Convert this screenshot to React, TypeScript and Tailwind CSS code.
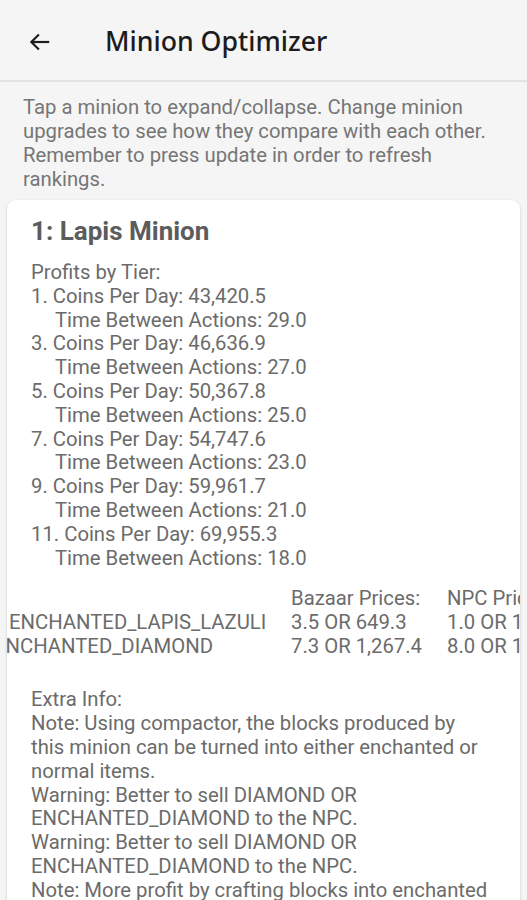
import React from 'react';

const tiers = [
  { tier: 1, coins: '43,420.5', time: '29.0' },
  { tier: 3, coins: '46,636.9', time: '27.0' },
  { tier: 5, coins: '50,367.8', time: '25.0' },
  { tier: 7, coins: '54,747.6', time: '23.0' },
  { tier: 9, coins: '59,961.7', time: '21.0' },
  { tier: 11, coins: '69,955.3', time: '18.0' },
];

const extraInfo = [
  'Note: Using compactor, the blocks produced by this minion can be turned into either enchanted or normal items.',
  'Warning: Better to sell DIAMOND OR ENCHANTED_DIAMOND to the NPC.',
  'Warning: Better to sell DIAMOND OR ENCHANTED_DIAMOND to the NPC.',
  'Note: More profit by crafting blocks into enchanted items.',
];

export default function App() {
  return (
    <div
      className="h-[900px] w-[527px] overflow-hidden bg-[#f5f5f5]"
      style={{ fontFamily: 'Roboto, "Liberation Sans", sans-serif' }}
    >
      {/* App bar */}
      <header className="flex h-[82px] items-center border-b-2 border-[#e3e3e3] bg-[#f5f5f5] pt-[3px]">
        <div className="flex w-[105px] items-center pl-[27px]">
          <svg width="26" height="26" viewBox="0 0 24 24" fill="none" stroke="#1c1c1c" strokeWidth="2">
            <path d="M20.5 12H4" />
            <path d="M11 5l-7 7 7 7" />
          </svg>
        </div>
        <h1
          className="text-[26.7px] font-medium text-[#1c1c1c]"
          style={{ fontFamily: '"Noto Sans", Roboto, sans-serif' }}
        >
          Minion Optimizer
        </h1>
      </header>

      {/* Intro */}
      <p className="px-[23px] pt-[13px] text-[20.3px] leading-[24px] text-[#767676]">
        Tap a minion to expand/collapse. Change minion upgrades to see how they compare with each other.
        Remember to press update in order to refresh rankings.
      </p>

      {/* Minion card */}
      <div className="mx-[7px] mt-[9px] overflow-hidden rounded-[9px] bg-white pb-6 shadow-[0_1px_3px_rgba(0,0,0,0.18)]">
        <h2 className="px-[24px] pt-[15px] text-[26px] font-bold leading-[32px] text-[#5c5c5c]">1: Lapis Minion</h2>

        <div className="mt-[14px] px-[24px] text-[20.3px] leading-[23.8px] text-[#6b6b6b]">
          <div>Profits by Tier:</div>
          {tiers.map((t) => (
            <React.Fragment key={t.tier}>
              <div>
                {t.tier}. Coins Per Day: {t.coins}
              </div>
              <div className="pl-[24px]">Time Between Actions: {t.time}</div>
            </React.Fragment>
          ))}
        </div>

        {/* Price table, wider than the card */}
        <div className="mt-[16px] whitespace-nowrap text-[20.3px] leading-[24px] text-[#6b6b6b]">
          <div className="flex">
            <div className="w-[284px] shrink-0" />
            <div className="w-[156px] shrink-0">Bazaar Prices:</div>
            <div className="shrink-0">NPC Prices:</div>
          </div>
          <div className="flex">
            <div className="w-[284px] shrink-0 pl-[2px]">ENCHANTED_LAPIS_LAZULI</div>
            <div className="w-[156px] shrink-0">3.5 OR 649.3</div>
            <div className="shrink-0">1.0 OR 160.0</div>
          </div>
          <div className="flex">
            <div className="-ml-[13px] mr-[13px] w-[284px] shrink-0">ENCHANTED_DIAMOND</div>
            <div className="w-[156px] shrink-0">7.3 OR 1,267.4</div>
            <div className="shrink-0">8.0 OR 1,280.0</div>
          </div>
        </div>

        <div className="mt-[30px] pl-[24px] pr-[29px] text-[20.3px] leading-[23.8px] text-[#6b6b6b]">
          <div>Extra Info:</div>
          {extraInfo.map((line, i) => (
            <div key={i}>{line}</div>
          ))}
        </div>
      </div>
    </div>
  );
}
